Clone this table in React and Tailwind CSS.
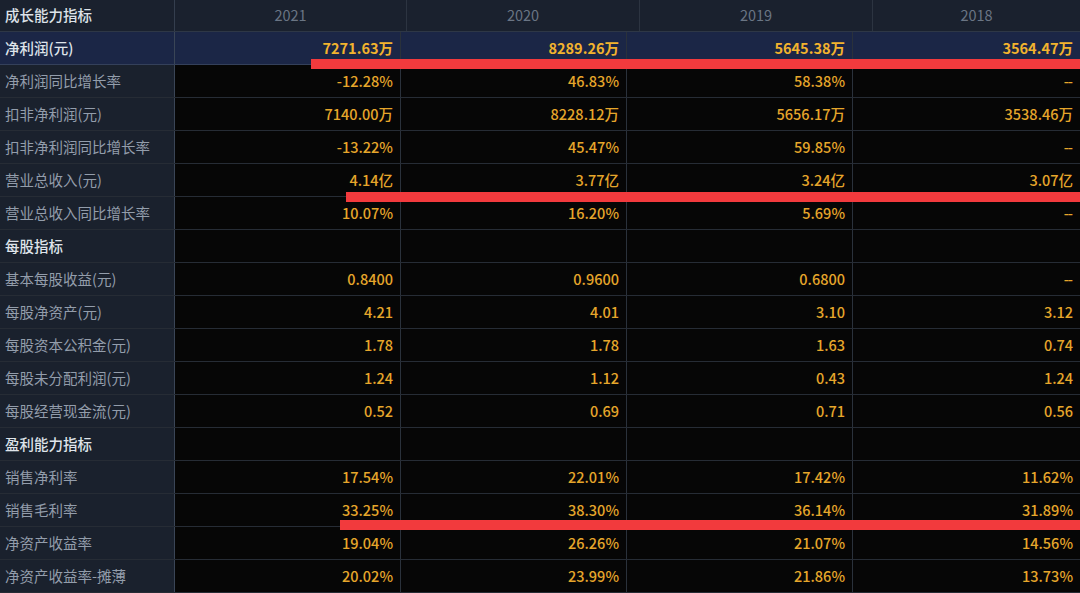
import React from "react";

const rows = [
  { label: "净利润(元)", vals: ["7271.63万", "8289.26万", "5645.38万", "3564.47万"], kind: "hl" },
  { label: "净利润同比增长率", vals: ["-12.28%", "46.83%", "58.38%", "--"] },
  { label: "扣非净利润(元)", vals: ["7140.00万", "8228.12万", "5656.17万", "3538.46万"] },
  { label: "扣非净利润同比增长率", vals: ["-13.22%", "45.47%", "59.85%", "--"] },
  { label: "营业总收入(元)", vals: ["4.14亿", "3.77亿", "3.24亿", "3.07亿"] },
  { label: "营业总收入同比增长率", vals: ["10.07%", "16.20%", "5.69%", "--"] },
  { label: "每股指标", vals: ["", "", "", ""], kind: "sec" },
  { label: "基本每股收益(元)", vals: ["0.8400", "0.9600", "0.6800", "--"] },
  { label: "每股净资产(元)", vals: ["4.21", "4.01", "3.10", "3.12"] },
  { label: "每股资本公积金(元)", vals: ["1.78", "1.78", "1.63", "0.74"] },
  { label: "每股未分配利润(元)", vals: ["1.24", "1.12", "0.43", "1.24"] },
  { label: "每股经营现金流(元)", vals: ["0.52", "0.69", "0.71", "0.56"] },
  { label: "盈利能力指标", vals: ["", "", "", ""], kind: "sec" },
  { label: "销售净利率", vals: ["17.54%", "22.01%", "17.42%", "11.62%"] },
  { label: "销售毛利率", vals: ["33.25%", "38.30%", "36.14%", "31.89%"] },
  { label: "净资产收益率", vals: ["19.04%", "26.26%", "21.07%", "14.56%"] },
  { label: "净资产收益率-摊薄", vals: ["20.02%", "23.99%", "21.86%", "13.73%"] },
];

const font = { fontFamily: '"Noto Sans CJK SC", "Noto Sans", sans-serif' };

export default function App() {
  return (
    <div className="relative w-[1080px] h-[593px] overflow-hidden bg-[#060606] text-[14.5px] leading-none" style={font}>
      {/* header */}
      <div className="grid grid-cols-[175px_232px_233px_233px_1fr] h-[32px] bg-[#1a212e] border-b border-[#2e3746]">
        <div className="flex items-center pl-[5px] text-[#dde2e8] font-medium border-r border-[#343e4e]">成长能力指标</div>
        {["2021", "2020", "2019", "2018"].map((y, i) => (
          <div key={y} className={"flex items-center justify-center text-[#6a7584] text-[14.5px] " + (i < 3 ? "border-r border-[#2c3441]" : "")}>
            {y}
          </div>
        ))}
      </div>
      {rows.map((r, idx) => {
        const hl = r.kind === "hl";
        const sec = r.kind === "sec" || hl;
        return (
          <div
            key={idx}
            className={
              "grid grid-cols-[175px_226px_226px_226px_1fr] h-[33px] border-b " +
              (hl ? "bg-[#1b2646] border-[#34405a]" : "border-[#262c35]")
            }
          >
            <div
              className={
                "flex items-center pl-[5px] border-r border-[#3a4556] " +
                (hl ? "" : "bg-[#1a212d] ") +
                (sec ? "text-[#dfe4ea] font-medium" : "text-[#939dab]")
              }
            >
              {r.label}
            </div>
            {r.vals.map((v, i) => (
              <div
                key={i}
                className={
                  "flex items-center justify-end pr-[7px] " +
                  (i < 3 ? "border-r border-[#2a313b] " : "") +
                  (hl ? "text-[#f2b32e] font-bold" : "text-[#e6a62b] font-medium")
                }
              >
                {v === "--" ? <span className="tracking-[-1px] pr-[1px]">--</span> : v}
              </div>
            ))}
          </div>
        );
      })}
      {/* red annotation lines */}
      <div className="absolute left-[311px] right-0 top-[59px] h-[10px] bg-[#f23a3d]" />
      <div className="absolute left-[346px] right-0 top-[192px] h-[10px] bg-[#f23a3d]" />
      <div className="absolute left-[340px] right-0 top-[520px] h-[10px] bg-[#f23a3d]" />
    </div>
  );
}
